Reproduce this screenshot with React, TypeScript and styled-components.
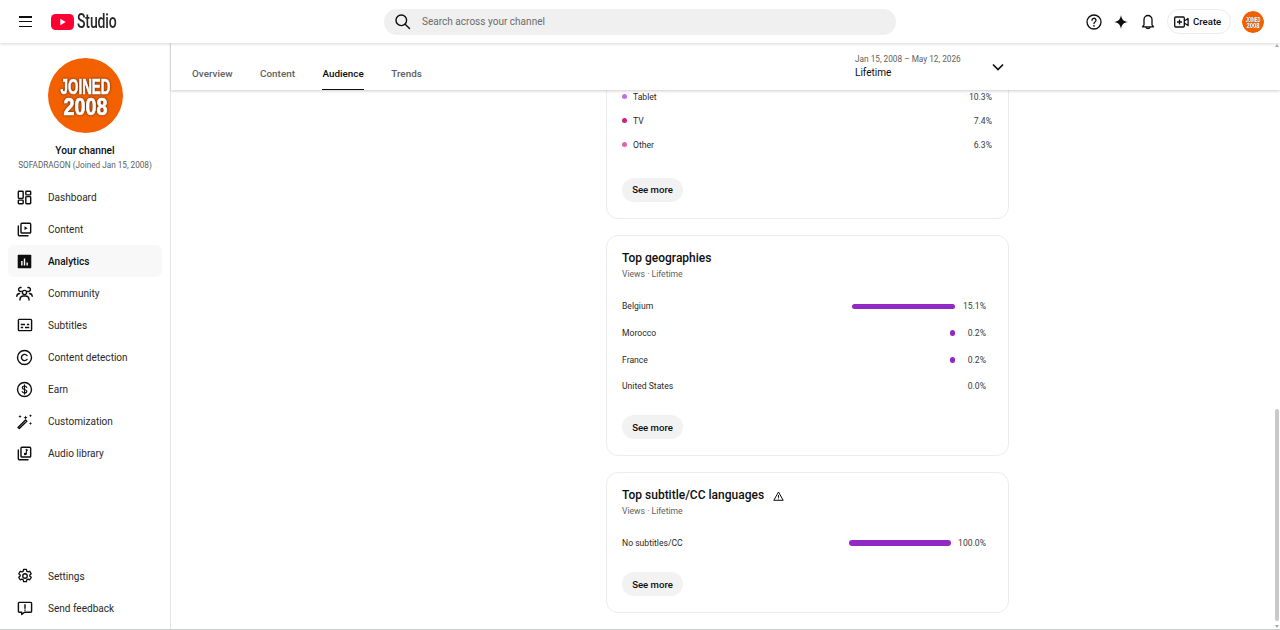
import React from "react";
import styled, { createGlobalStyle } from "styled-components";

const Global = createGlobalStyle`
  html, body { margin: 0; padding: 0; height: 100%; background: #fff; overflow: hidden; }
  body { font-family: Roboto, "Liberation Sans", Arial, sans-serif; color: #0d0d0d; }
  #root { height: 100%; }
  * { box-sizing: border-box; }
`;

const Page = styled.div`
  height: 630px;
  display: flex;
  flex-direction: column;
  border-bottom: 1px solid #c4cdcc;
  overflow: hidden;
`;
const Header = styled.header`
  height: 43px;
  flex: none;
  display: flex;
  align-items: center;
  background: #fff;
  box-shadow: 0 1px 3px rgba(0,0,0,.16);
  position: relative;
  z-index: 3;
  padding: 0 16px 0 19px;
`;
const Menu = styled.div`
  width: 13px; height: 11px; display: flex; flex-direction: column; justify-content: space-between; margin-right: 19px;
  i { display: block; height: 1.5px; background: #0d0d0d; }
`;
const Logo = styled.div`
  display: flex; align-items: center; width: 333px; height: 24px;
`;
const StudioText = styled.span`
  font-family: "Roboto", sans-serif; font-size: 19.5px; font-weight: 500; color: #282828;
  display: inline-block; transform: scaleX(.72); transform-origin: left center; margin-left: 1.5px; letter-spacing: -.2px;
`;
const Search = styled.div`
  width: 512px; height: 26px; border-radius: 13px; background: #f0f0f0; display: flex; align-items: center; padding-left: 10px; gap: 11px;
  font-size: 10.05px; color: #6b6b6b;
`;
const HeaderRight = styled.div`
  margin-left: auto; display: flex; align-items: center;
`;
const IconSlot = styled.div`
  width: 16px; height: 16px; display: flex; align-items: center; justify-content: center; margin-right: 11px;
`;
const CreateButton = styled.div`
  height: 25px; width: 64px; border: 1px solid #ececec; border-radius: 13px; display: flex; align-items: center; padding-left: 6px; gap: 4px;
  font-size: 9.6px; font-weight: 500; color: #0d0d0d;
`;
const SmallAvatar = styled.div`
  width: 22px; height: 22px; margin-left: 11px; border-radius: 50%; overflow: hidden; display: flex;
`;
const Body = styled.div`
  flex: 1; min-height: 0; display: flex;
`;
const Sidebar = styled.aside`
  width: 171px; flex: none; border-right: 1px solid #e5e5e5; display: flex; flex-direction: column; padding: 15px 8px 5px; background: #fff;
`;
const Profile = styled.div`
  display: flex; flex-direction: column; align-items: center; margin-bottom: 10px;
`;
const ChannelTitle = styled.div`
  font-size: 10.2px; font-weight: 500; color: #0d0d0d; margin-top: 11px; line-height: 14px;
`;
const ChannelSub = styled.div`
  font-size: 8.2px; color: #606060; line-height: 12px; margin-top: 1px; white-space: nowrap;
`;
const Nav = styled.nav`
  display: flex; flex-direction: column;
`;
const NavItem = styled.div<{ $active?: boolean }>`
  height: 32px; display: flex; align-items: center; padding-left: 8px; gap: 15px; border-radius: 6px;
  font-size: 10.05px; color: ${p => (p.$active ? "#0d0d0d" : "#282828")}; font-weight: ${p => (p.$active ? 500 : 400)};
  background: ${p => (p.$active ? "#f8f8f8" : "transparent")};
`;
const NavIcon = styled.span`
  width: 17px; height: 17px; flex: none; display: flex; align-items: center; justify-content: center;
`;
const Spacer = styled.div`flex: 1;`;
const Main = styled.main`
  flex: 1; min-width: 0; display: flex; flex-direction: column; position: relative;
`;
const TabBar = styled.div`
  height: 47px; flex: none; display: flex; background: #fff; box-shadow: 0 1px 3px rgba(0,0,0,.2); position: relative; z-index: 2; padding-left: 21px;
`;
const Tabs = styled.div`
  display: flex; gap: 27.5px; width: 663px;
`;
const Tab = styled.div<{ $active?: boolean }>`
  height: 47px; display: flex; align-items: center; padding-top: 14px; font-size: 9.9px; font-weight: 500;
  color: ${p => (p.$active ? "#0d0d0d" : "#606060")};
  border-bottom: 1.5px solid ${p => (p.$active ? "#0d0d0d" : "transparent")};
`;
const DateBlock = styled.div`
  width: 137px; padding-top: 10px;
`;
const DateRange = styled.div`
  font-size: 8.25px; color: #606060; line-height: 12px; white-space: nowrap;
`;
const DateLabel = styled.div`
  font-size: 10.05px; color: #0d0d0d; line-height: 14px; margin-top: 1px;
`;
const Chevron = styled.div`
  padding-top: 13px;
`;
const Scroller = styled.div`
  flex: 1; min-height: 0; overflow: hidden; display: flex; flex-direction: column; justify-content: flex-end; align-items: flex-start; padding: 0 0 16px 435px; gap: 16px;
`;
const Card = styled.section`
  width: 403px; flex: none; border: 1px solid #ececec; border-radius: 12px; background: #fff; padding: 0 16px 16px 15px;
`;
const ClippedCard = styled(Card)`
  padding-top: 24px;
`;
const CardTitle = styled.h3`
  margin: 14px 0 0; font-size: 12px; font-weight: 500; color: #0d0d0d; line-height: 17px; display: flex; align-items: center; gap: 9px;
`;
const CardSub = styled.div`
  font-size: 8.6px; color: #606060; line-height: 12px; margin-top: 1px;
`;
const Bars = styled.div<{ $top: number }>`
  margin-top: ${p => p.$top}px; display: flex; flex-direction: column;
`;
const BarRow = styled.div`
  height: 26.7px; display: flex; align-items: center; font-size: 8.6px; color: #282828;
`;
const BarLabel = styled.span`
  flex: 1;
`;
const Bar = styled.div<{ $w: number }>`
  width: ${p => p.$w}px; height: 5.5px; border-radius: 3px; background: #9129c4; flex: none;
`;
const Pct = styled.span<{ $w?: number }>`
  width: ${p => p.$w ?? 31}px; flex: none; text-align: right; margin-right: 6px; color: #3a3a3a;
`;
const LegendRow = styled.div`
  height: 24px; display: flex; align-items: center; font-size: 8.6px; color: #282828; gap: 6px;
`;
const Dot = styled.i<{ $c: string }>`
  width: 5px; height: 5px; border-radius: 50%; background: ${p => p.$c}; flex: none;
`;
const LegendPct = styled.span`
  margin-left: auto; color: #3a3a3a;
`;
const SeeMore = styled.div<{ $top: number }>`
  margin-top: ${p => p.$top}px; width: 61px; height: 24px; border-radius: 12px; background: #f2f2f2; display: flex; align-items: center; justify-content: center; font-size: 9.6px; font-weight: 500; color: #0d0d0d;
`;
const ScrollThumb = styled.div`
  position: absolute; right: 1px; bottom: 8px; width: 4px; height: 212px; background: #c9c9c9; border-radius: 2px; z-index: 3;
`;
const ScrollArrow = styled.div<{ $up?: boolean }>`
  position: absolute; right: 1px; width: 0; height: 0; z-index: 4;
  border-left: 2px solid transparent; border-right: 2px solid transparent;
  ${p => (p.$up ? "top: 1px; border-bottom: 3px solid #a8a8a8;" : "bottom: 1px; border-top: 3px solid #a8a8a8;")}
`;
const BadgeLetters = styled.g`
  font-family: "Liberation Sans", sans-serif;
  font-weight: 700;
  fill: #fff;
  stroke: #fff;
  stroke-width: .7px;
  text-anchor: middle;
  filter: drop-shadow(0 0 .8px #3a2010);
`;

const S = { fill: "none", stroke: "#0d0d0d", strokeLinecap: "round", strokeLinejoin: "round" } as const;

const Badge = ({ size }: { size: number }) => (
  <svg width={size} height={size} viewBox="0 0 75 75">
    <circle cx="37.5" cy="37.5" r="37.5" fill="#f26000" />
    <BadgeLetters>
      <text transform="translate(37.5 36) scale(.61 1)" fontSize="22">JOINED</text>
      <text transform="translate(37.5 57) scale(.86 1)" fontSize="23">2008</text>
    </BadgeLetters>
  </svg>
);

const icons: Record<string, React.ReactNode> = {
  dashboard: (
    <svg width="15" height="15" viewBox="0 0 17 17" {...S} strokeWidth={1.6}>
      <rect x="1.5" y="1.5" width="5.5" height="8" rx=".8" /><rect x="10" y="1.5" width="5.5" height="4" rx=".8" />
      <rect x="1.5" y="11.5" width="5.5" height="4" rx=".8" /><rect x="10" y="7.5" width="5.5" height="8" rx=".8" />
    </svg>
  ),
  content: (
    <svg width="15" height="15" viewBox="0 0 17 17" {...S} strokeWidth={1.6}>
      <rect x="4.5" y="1.5" width="11" height="11" rx="1" /><path d="M1.5 4.5v10a1 1 0 0 0 1 1h10" />
      <path d="M8.5 4.8v4.4L12 7z" fill="#0d0d0d" stroke="none" />
    </svg>
  ),
  analytics: (
    <svg width="15" height="15" viewBox="0 0 17 17">
      <rect x=".8" y=".8" width="15.4" height="15.4" rx="1" fill="#0d0d0d" />
      <path d="M4.7 8h1.6v5H4.7zM7.7 5h1.6v8H7.7zM10.7 9.5h1.6V13h-1.6z" fill="#fff" />
    </svg>
  ),
  community: (
    <svg width="17" height="17" viewBox="0 0 17 17" {...S} strokeWidth={1.4}>
      <circle cx="8.5" cy="7.5" r="2.1" /><path d="M4 15v-1a3.5 3.5 0 0 1 3.5-3h2a3.5 3.5 0 0 1 3.5 3v1" />
      <path d="M5.3 6.3A2 2 0 1 1 5 2.5M11.7 6.3A2 2 0 1 0 12 2.5M.8 11.3A3 3 0 0 1 3.5 8.5M16.2 11.3A3 3 0 0 0 13.5 8.5" />
    </svg>
  ),
  subtitles: (
    <svg width="16" height="16" viewBox="0 0 17 17" {...S} strokeWidth={1.5}>
      <rect x="1.5" y="2.5" width="14" height="12" rx="1" />
      <path d="M4 8h4.5M10.5 8H13M4 11.2h2.5M8.5 11.2H13" strokeLinecap="butt" />
    </svg>
  ),
  copyright: (
    <svg width="17" height="17" viewBox="0 0 17 17" {...S} strokeWidth={1.4}>
      <circle cx="8.5" cy="8.5" r="7" /><path d="M11 6.6A3.1 3.1 0 1 0 11 10.4" />
    </svg>
  ),
  earn: (
    <svg width="17" height="17" viewBox="0 0 17 17" {...S} strokeWidth={1.4}>
      <circle cx="8.5" cy="8.5" r="7" />
      <path d="M10.7 6.4c-.3-.9-1.2-1.4-2.2-1.4-1.3 0-2.2.7-2.2 1.7 0 2.4 4.5 1.2 4.500 3.600 0 1-1 1.700-2.300 1.700-1.100 0-2-.5-2.300-1.400M8.500 3.900v9.200" strokeWidth={1.2} />
    </svg>
  ),
  custom: (
    <svg width="17" height="17" viewBox="0 0 17 17" {...S}>
      <path d="M2 15l7.500-7.500 1.300 1.300L3.300 16z" strokeWidth={1.4} transform="translate(0 -.5)" />
      <path d="M9 4l.6-1.600L10.200 4l1.500.6-1.500.6-.6 1.600-.6-1.600-1.500-.6zM3.500 3l.5-1.200.5 1.200 1.200.5-1.200.5-.5 1.200L3.500 4 2.300 3.500zM14 2.200l.5-1 .5 1 1 .5-1 .5-.5 1-.5-1-1-.5zM14 10l.5-1 .5 1 1 .5-1 .5-.5 1-.5-1-1-.5z" fill="#0d0d0d" stroke="none" />
    </svg>
  ),
  audio: (
    <svg width="15" height="15" viewBox="0 0 17 17" {...S} strokeWidth={1.6}>
      <rect x="4.500" y="1.500" width="11" height="11" rx="1" /><path d="M1.500 4.500v10a1 1 0 0 0 1 1h10" />
      <path d="M10.600 3.800v5.200" strokeWidth={1.2} /><circle cx="9.200" cy="9" r="1.400" fill="#0d0d0d" stroke="none" /><path d="M10.600 4h1.800v1.400h-1.800z" fill="#0d0d0d" stroke="none" />
    </svg>
  ),
  settings: (
    <svg width="16" height="16" viewBox="0 0 17 17" {...S} strokeWidth={1.4}>
      <circle cx="8.500" cy="8.500" r="2.400" />
      <path d="M7 1.500h3l.4 2 1.300.7 1.900-.7 1.500 2.600-1.500 1.300v1.200l1.500 1.300-1.500 2.600-1.900-.7-1.300.7-.4 2H7l-.4-2-1.300-.7-1.900.7-1.500-2.600 1.500-1.300V7.400L1.900 6.100l1.500-2.600 1.900.7 1.300-.7z" />
    </svg>
  ),
  feedback: (
    <svg width="16" height="16" viewBox="0 0 17 17" {...S} strokeWidth={1.5}>
      <path d="M2.500 2.500h12a1 1 0 0 1 1 1v8.500a1 1 0 0 1-1 1H8l-3 2.300V13H2.500a1 1 0 0 1-1-1V3.500a1 1 0 0 1 1-1z" />
      <path d="M8.500 5v3.800M8.500 10.600v.3" />
    </svg>
  ),
};

const topNav: [string, string][] = [
  ["dashboard", "Dashboard"], ["content", "Content"], ["analytics", "Analytics"], ["community", "Community"],
  ["subtitles", "Subtitles"], ["copyright", "Content detection"], ["earn", "Earn"], ["custom", "Customization"], ["audio", "Audio library"],
];

export default function App() {
  return (
    <Page>
      <Global />
      <Header>
        <Menu><i /><i /><i /></Menu>
        <Logo>
          <svg width="24" height="16" viewBox="0 0 24 16">
            <rect width="23" height="16" rx="4.500" fill="#ff0033" />
            <path d="M9.300 4.800v6.400l5.400-3.200z" fill="#fff" />
          </svg>
          <StudioText>Studio</StudioText>
        </Logo>
        <Search>
          <svg width="17" height="17" viewBox="0 0 17 17" fill="none" stroke="#0d0d0d" strokeWidth="1.4" strokeLinecap="round">
            <circle cx="7.300" cy="7.300" r="5.300" /><path d="M11.200 11.200l4.300 4.300" />
          </svg>
          Search across your channel
        </Search>
        <HeaderRight>
          <IconSlot>
            <svg width="16" height="16" viewBox="0 0 16 16" fill="none" stroke="#0d0d0d" strokeWidth="1.300" strokeLinecap="round">
              <circle cx="8" cy="8" r="7" /><path d="M6 6.300a2 2 0 1 1 3 1.700c-.7.400-1 .8-1 1.500" /><path d="M8 11.800v.1" strokeWidth="1.600" />
            </svg>
          </IconSlot>
          <IconSlot>
            <svg width="14" height="14" viewBox="0 0 14 14"><path d="M7 0c.6 4.300 2.700 6.400 7 7-4.300.6-6.400 2.700-7 7-.6-4.300-2.700-6.400-7-7 4.300-.6 6.400-2.700 7-7z" fill="#0d0d0d" /></svg>
          </IconSlot>
          <IconSlot>
            <svg width="16" height="16" viewBox="0 0 16 16" fill="none" stroke="#0d0d0d" strokeWidth="1.300" strokeLinejoin="round">
              <path d="M2.500 12.800h11l-1.500-2V5.500a4 4 0 0 0-8 0v5.300z" /><path d="M6 13.300c.3 1.600 3.700 1.600 4 0" strokeLinecap="round" />
            </svg>
          </IconSlot>
          <CreateButton>
            <svg width="15" height="12" viewBox="0 0 15 12" fill="none" stroke="#0d0d0d" strokeWidth="1.300" strokeLinejoin="round">
              <rect x=".7" y="1" width="9.600" height="10" rx="1" /><path d="M10.300 5l3.800-2.500v7L10.300 7M5.500 3.500v5M3 6h5" />
            </svg>
            Create
          </CreateButton>
          <SmallAvatar><Badge size={22} /></SmallAvatar>
        </HeaderRight>
      </Header>
      <Body>
        <Sidebar>
          <Profile>
            <Badge size={75} />
            <ChannelTitle>Your channel</ChannelTitle>
            <ChannelSub>SOFADRAGON (Joined Jan 15, 2008)</ChannelSub>
          </Profile>
          <Nav>
            {topNav.map(([k, label]) => (
              <NavItem key={k} $active={k === "analytics"}><NavIcon>{icons[k]}</NavIcon>{label}</NavItem>
            ))}
          </Nav>
          <Spacer />
          <Nav>
            <NavItem><NavIcon>{icons.settings}</NavIcon>Settings</NavItem>
            <NavItem><NavIcon>{icons.feedback}</NavIcon>Send feedback</NavItem>
          </Nav>
        </Sidebar>
        <Main>
          <TabBar>
            <Tabs>
              <Tab>Overview</Tab><Tab>Content</Tab><Tab $active>Audience</Tab><Tab>Trends</Tab>
            </Tabs>
            <DateBlock>
              <DateRange>Jan 15, 2008 – May 12, 2026</DateRange>
              <DateLabel>Lifetime</DateLabel>
            </DateBlock>
            <Chevron>
              <svg width="12" height="8" viewBox="0 0 12 8" fill="none" stroke="#0d0d0d" strokeWidth="1.600"><path d="M1 1.500l5 5 5-5" /></svg>
            </Chevron>
          </TabBar>
          <Scroller>
            <ClippedCard>
              <LegendRow><Dot $c="#c06ee8" />Tablet<LegendPct>10.3%</LegendPct></LegendRow>
              <LegendRow><Dot $c="#d0207f" />TV<LegendPct>7.4%</LegendPct></LegendRow>
              <LegendRow><Dot $c="#e662ab" />Other<LegendPct>6.3%</LegendPct></LegendRow>
              <SeeMore $top={21}>See more</SeeMore>
            </ClippedCard>
            <Card>
              <CardTitle>Top geographies</CardTitle>
              <CardSub>Views · Lifetime</CardSub>
              <Bars $top={13.5}>
                <BarRow><BarLabel>Belgium</BarLabel><Bar $w={103} /><Pct>15.1%</Pct></BarRow>
                <BarRow><BarLabel>Morocco</BarLabel><Bar $w={5.5} /><Pct>0.2%</Pct></BarRow>
                <BarRow><BarLabel>France</BarLabel><Bar $w={5.5} /><Pct>0.2%</Pct></BarRow>
                <BarRow><BarLabel>United States</BarLabel><Pct>0.0%</Pct></BarRow>
              </Bars>
              <SeeMore $top={15.5}>See more</SeeMore>
            </Card>
            <Card>
              <CardTitle>
                Top subtitle/CC languages
                <svg width="11" height="10" viewBox="0 0 11 10" fill="none" stroke="#0d0d0d" strokeWidth="1"><path d="M5.500 1L10.200 9.300H.8z" /><path d="M5.500 4v2.700M5.500 7.500v.8" /></svg>
              </CardTitle>
              <CardSub>Views · Lifetime</CardSub>
              <Bars $top={12.5}>
                <BarRow><BarLabel>No subtitles/CC</BarLabel><Bar $w={102} /><Pct $w={35}>100.0%</Pct></BarRow>
              </Bars>
              <SeeMore $top={15.5}>See more</SeeMore>
            </Card>
          </Scroller>
          <ScrollArrow $up />
          <ScrollThumb />
          <ScrollArrow />
        </Main>
      </Body>
    </Page>
  );
}
